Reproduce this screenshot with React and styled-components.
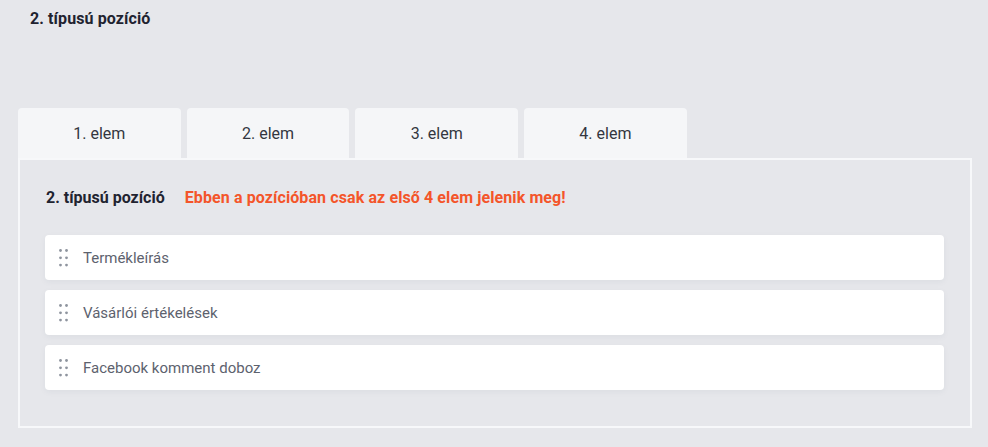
import React, { useState } from 'react'
import styled, { createGlobalStyle } from 'styled-components'

const GlobalStyle = createGlobalStyle`
    html, body {
        margin: 0;
        padding: 0;
        background: #e6e7eb;
        font-family: Roboto, "Liberation Sans", Arial, sans-serif;
    }
`

const tabs = ['1. elem', '2. elem', '3. elem', '4. elem']
const items = ['Termékleírás', 'Vásárlói értékelések', 'Facebook komment doboz']

export default function App() {
    const [active, setActive] = useState(0)

    return (
        <Page>
            <GlobalStyle />
            <PageTitle>2. típusú pozíció</PageTitle>
            <Tabs>
                {tabs.map((t, i) => (
                    <Tab key={t} $active={i === active} onClick={() => setActive(i)}>
                        {t}
                    </Tab>
                ))}
            </Tabs>
            <Panel>
                <Heading>
                    <HeadingTitle>2. típusú pozíció</HeadingTitle>
                    <Warning>Ebben a pozícióban csak az első 4 elem jelenik meg!</Warning>
                </Heading>
                <List>
                    {items.map((item) => (
                        <Item key={item}>
                            <Handle>
                                <svg width="9" height="18" viewBox="0 0 9 18">
                                    {[0, 1, 2].map((r) =>
                                        [0, 1].map((c) => (
                                            <circle key={`${r}${c}`} cx={1.5 + c * 6} cy={1.5 + r * 7.3} r="1.4" fill="#8e949e" />
                                        ))
                                    )}
                                </svg>
                            </Handle>
                            <ItemLabel>{item}</ItemLabel>
                        </Item>
                    ))}
                </List>
            </Panel>
        </Page>
    )
}

const Page = styled.div`
    padding: 0 16px 0 18px;
`

const PageTitle = styled.h2`
    margin: 0;
    padding: 9px 0 0 12px;
    font-size: 16px;
    line-height: 20px;
    font-weight: 700;
    letter-spacing: 0.1px;
    color: #1f2330;
`

const Tabs = styled.div`
    display: flex;
    gap: 6px;
    margin-top: 79px;
`

const Tab = styled.div`
    width: 162.7px;
    height: 50px;
    display: flex;
    align-items: center;
    justify-content: center;
    background: #f5f6f8;
    border-radius: 4px 4px 0 0;
    font-size: 16px;
    color: #333640;
    cursor: pointer;
`

const Panel = styled.div`
    border: 2px solid #f7f8fa;
    padding: 27px 26px 36px 25px;
`

const Heading = styled.div`
    display: flex;
    align-items: center;
    gap: 20px;
    padding-left: 1px;
    height: 20px;
`

const HeadingTitle = styled.span`
    font-size: 16px;
    font-weight: 700;
    color: #1f2330;
`

const Warning = styled.span`
    font-size: 16px;
    font-weight: 700;
    letter-spacing: 0.1px;
    color: #f4552a;
`

const List = styled.div`
    display: flex;
    flex-direction: column;
    gap: 10px;
    margin-top: 28px;
`

const Item = styled.div`
    height: 45px;
    display: flex;
    align-items: center;
    background: #ffffff;
    border-radius: 4px;
    box-shadow: 0 2px 6px rgba(40, 50, 70, 0.05);
    padding-left: 14px;
`

const Handle = styled.span`
    display: flex;
    width: 9px;
    margin-right: 15px;
`

const ItemLabel = styled.span`
    font-size: 15px;
    color: #5d626e;
`
